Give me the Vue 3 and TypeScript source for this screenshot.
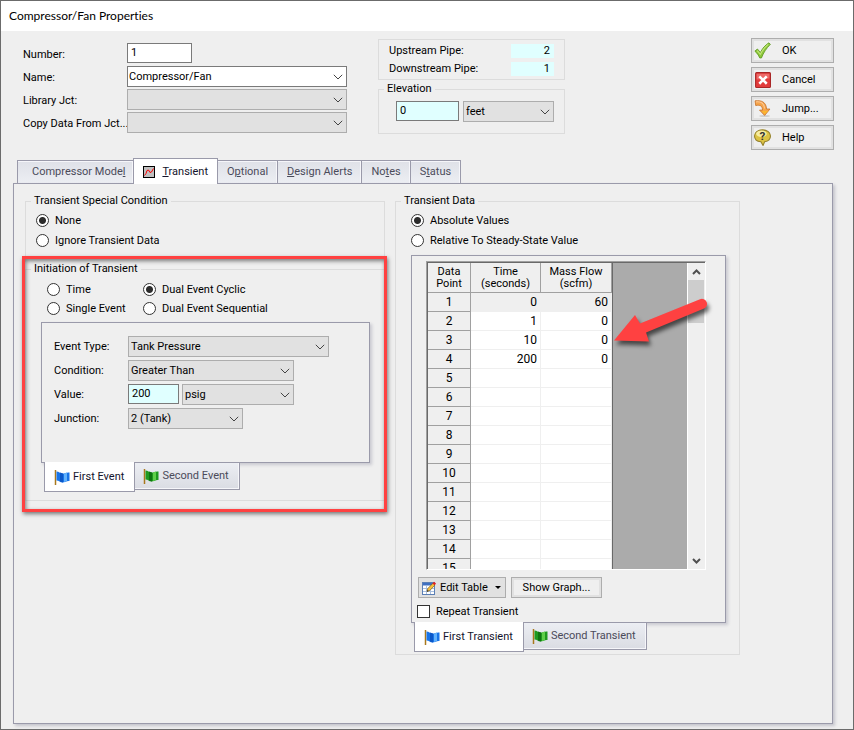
<script setup lang="ts">
import { ref } from 'vue'

interface Tab {
  id: string
  pre: string
  key: string
  post: string
}

interface DataRow {
  time: string
  flow: string
}

const tabs: Tab[] = [
  { id: 'model', pre: 'Compressor Mode', key: 'l', post: '' },
  { id: 'transient', pre: '', key: 'T', post: 'ransient' },
  { id: 'optional', pre: 'O', key: 'p', post: 'tional' },
  { id: 'alerts', pre: '', key: 'D', post: 'esign Alerts' },
  { id: 'notes', pre: 'No', key: 't', post: 'es' },
  { id: 'status', pre: 'S', key: 't', post: 'atus' },
]

const filled: DataRow[] = [
  { time: '0', flow: '60' },
  { time: '1', flow: '0' },
  { time: '10', flow: '0' },
  { time: '200', flow: '0' },
]
const rows: DataRow[] = Array.from({ length: 15 }, (_, i) => filled[i] ?? { time: '', flow: '' })

const activeTab = ref('transient')
const activeEvent = ref('First Event')
const activeTransient = ref('First Transient')
const number = ref('1')
const elevation = ref('0')
const value = ref('200')
const special = ref('none')
const initiation = ref('cyclic')
const mode = ref('absolute')
const repeat = ref(false)
</script>

<template>
  <div class="window">
    <header class="title">Compressor/Fan Properties</header>

    <section class="head">
      <div class="form">
        <label for="number">Number:</label>
        <input id="number" v-model="number" class="box num" type="text" />
        <label for="name">Name:</label>
        <span class="combo white">
          <select id="name"><option>Compressor/Fan</option></select>
          <svg viewBox="0 0 10 6"><path d="M.8.8 5 5 9.2.8" /></svg>
        </span>
        <label for="library">Library Jct:</label>
        <span class="combo">
          <select id="library"><option></option></select>
          <svg viewBox="0 0 10 6"><path d="M.8.8 5 5 9.2.8" /></svg>
        </span>
        <label for="copy">Copy Data From Jct...</label>
        <span class="combo">
          <select id="copy"><option></option></select>
          <svg viewBox="0 0 10 6"><path d="M.8.8 5 5 9.2.8" /></svg>
        </span>
      </div>

      <div class="side">
        <dl class="pipes">
          <dt>Upstream Pipe:</dt>
          <dd>2</dd>
          <dt>Downstream Pipe:</dt>
          <dd>1</dd>
        </dl>
        <fieldset class="elevation">
          <legend>Elevation</legend>
          <div class="pair">
            <input v-model="elevation" class="box cyan" type="text" aria-label="Elevation" />
            <span class="combo">
              <select aria-label="Elevation units"><option>feet</option></select>
              <svg viewBox="0 0 10 6"><path d="M.8.8 5 5 9.2.8" /></svg>
            </span>
          </div>
        </fieldset>
      </div>

      <div class="actions">
        <button type="button" class="btn">
          <svg viewBox="0 0 16 16">
            <path d="M.8 8.600 3.200 6.600 6 9.800C8 6 10.500 3 14 .8l1.400 1.400C11.500 6 9 10 7 15H5.400C4.200 12.200 2.800 10.400.8 8.600Z" fill="#8cc63a" stroke="#5c9a1f" stroke-width=".8" />
            <path d="M3 8.200 6 11.600C8 7.500 10.500 4.500 13.400 2.300" fill="none" stroke="#c4e67a" />
          </svg>
          OK
        </button>
        <button type="button" class="btn">
          <svg viewBox="0 0 16 16">
            <rect x="1.500" y="1.500" width="14" height="14" rx="1" fill="#e23b3b" stroke="#a92626" />
            <path d="M2.500 8V2.500h12V7Z" fill="#ee6a68" />
            <path d="M5 5l7 7M12 5l-7 7" stroke="#fff" stroke-width="2.400" />
          </svg>
          Cancel
        </button>
        <button type="button" class="btn">
          <svg viewBox="0 0 16 16">
            <ellipse cx="10" cy="15" rx="5" ry="1" fill="#cfcfcf" />
            <path d="M1 .8C7 0 11.500 2 11.800 8.500H15L10 14.500 5.200 9.500H8C8 5.800 6 4.200 1.600 5.200Z" fill="#f6a44a" stroke="#c9742a" stroke-width=".8" />
            <path d="M1.800 1.800C6 1.400 9.500 3 10 8" fill="none" stroke="#fbc99a" />
            <path d="M7.300 10.300h6L10 13.400Z" fill="#fbb72c" />
          </svg>
          Jump...
        </button>
        <button type="button" class="btn">
          <svg viewBox="0 0 16 16">
            <path d="M8 .8C12.400.8 15.500 3.200 15.500 6.500 15.500 9.500 13 11.500 10 12L8.500 15.500 6.500 12C3 11.600.5 9.500.5 6.500.5 3.200 3.600.8 8 .8Z" fill="#dcc243" stroke="#94812c" />
            <ellipse cx="7" cy="4.500" rx="5" ry="3" fill="#f7eda0" />
            <text x="8" y="10.500" class="mark">?</text>
          </svg>
          Help
        </button>
      </div>
    </section>

    <nav class="tabs" role="tablist">
      <button
        v-for="t in tabs"
        :key="t.id"
        type="button"
        role="tab"
        :class="['tab', t.id, { on: activeTab === t.id }]"
        :aria-selected="activeTab === t.id"
        @click="activeTab = t.id"
      >
        <svg v-if="t.id === 'transient'" viewBox="0 0 12 12">
          <rect x=".5" y=".5" width="11" height="11" fill="#c0c0c0" stroke="#000" />
          <path d="M1.500 9.500 3 7.500 4 4.500 5.500 4 7 6.500 8.500 6 10.500 2.500" fill="none" stroke="#f00" />
        </svg>
        <span>{{ t.pre }}<u>{{ t.key }}</u>{{ t.post }}</span>
      </button>
    </nav>

    <main class="page">
      <div class="left">
        <fieldset class="special">
          <legend>Transient Special Condition</legend>
          <label class="opt"><input v-model="special" type="radio" name="special" value="none" />None</label>
          <label class="opt"><input v-model="special" type="radio" name="special" value="ignore" />Ignore Transient Data</label>
        </fieldset>

        <div class="marked">
          <fieldset class="initiation">
            <legend>Initiation of Transient</legend>
            <div class="kinds">
              <label class="opt"><input v-model="initiation" type="radio" name="init" value="time" />Time</label>
              <label class="opt"><input v-model="initiation" type="radio" name="init" value="cyclic" />Dual Event Cyclic</label>
              <label class="opt"><input v-model="initiation" type="radio" name="init" value="single" />Single Event</label>
              <label class="opt"><input v-model="initiation" type="radio" name="init" value="sequential" />Dual Event Sequential</label>
            </div>
            <div class="sheet event">
              <label for="etype">Event Type:</label>
              <span class="combo w1">
                <select id="etype"><option>Tank Pressure</option></select>
                <svg viewBox="0 0 10 6"><path d="M.8.8 5 5 9.2.8" /></svg>
              </span>
              <label for="cond">Condition:</label>
              <span class="combo w2">
                <select id="cond"><option>Greater Than</option></select>
                <svg viewBox="0 0 10 6"><path d="M.8.8 5 5 9.2.8" /></svg>
              </span>
              <label for="val">Value:</label>
              <div class="pair w2">
                <input id="val" v-model="value" class="box cyan" type="text" />
                <span class="combo">
                  <select aria-label="Value units"><option>psig</option></select>
                  <svg viewBox="0 0 10 6"><path d="M.8.8 5 5 9.2.8" /></svg>
                </span>
              </div>
              <label for="junc">Junction:</label>
              <span class="combo w3">
                <select id="junc"><option>2 (Tank)</option></select>
                <svg viewBox="0 0 10 6"><path d="M.8.8 5 5 9.2.8" /></svg>
              </span>
            </div>
            <div class="feet" role="tablist">
              <button
                v-for="name in ['First Event', 'Second Event']"
                :key="name"
                type="button"
                role="tab"
                :class="['foot', { on: activeEvent === name }]"
                :aria-selected="activeEvent === name"
                @click="activeEvent = name"
              >
                <svg viewBox="0 0 16 16" :class="name.startsWith('First') ? 'blue' : 'green'">
                  <path class="pole" d="M1.500 1v15" />
                  <path class="cloth" d="M2.500 2.500C5 2.500 6 4.500 8.500 4.500S13 3 15.500 3.500V12C13 11.500 11 13.500 8.500 13.500S5 11.500 2.500 11.500Z" />
                  <path class="shade" d="M6 3.500 9 4.500V13.500L6 12.500Z" />
                  <path class="shine" d="M10 4.500 13 3.500V12L10 13Z" />
                </svg>
                {{ name }}
              </button>
            </div>
          </fieldset>
          <div class="highlight"></div>
        </div>
      </div>

      <fieldset class="data">
        <legend>Transient Data</legend>
        <label class="opt"><input v-model="mode" type="radio" name="mode" value="absolute" />Absolute Values</label>
        <label class="opt"><input v-model="mode" type="radio" name="mode" value="relative" />Relative To Steady-State Value</label>

        <div class="sheet points">
          <div class="grid">
            <table>
              <thead>
                <tr><th>Data<br />Point</th><th>Time<br />(seconds)</th><th>Mass Flow<br />(scfm)</th></tr>
              </thead>
              <tbody>
                <tr v-for="(r, i) in rows" :key="i">
                  <th>{{ i + 1 }}</th>
                  <td>{{ r.time }}</td>
                  <td>{{ r.flow }}</td>
                </tr>
              </tbody>
            </table>
            <div class="void"></div>
            <div class="scroll">
              <button type="button" aria-label="Scroll up"><svg viewBox="0 0 9 6"><path d="M1 5 4.500 1.500 8 5" /></svg></button>
              <div class="thumb"></div>
              <button type="button" aria-label="Scroll down"><svg viewBox="0 0 9 6"><path d="M1 1 4.500 4.500 8 1" /></svg></button>
            </div>
            <svg class="arrow" viewBox="0 0 100 60">
              <path d="M91 5.300A5 5 0 0 1 95 14.500L37 38.500 40 47.500 5 46.500 26 21 31 29.500Z" />
            </svg>
          </div>
          <div class="tools">
            <button type="button" class="btn edit">
              <svg viewBox="0 0 14 14">
                <rect x=".5" y="1.500" width="12" height="12" fill="#fff" stroke="#5b7fb5" />
                <path d="M1 2h11v2.500H1z" fill="#3f6fc0" />
                <path d="M1 7.500h11M1 10.500h11M4.500 5v8M8.500 5v8" stroke="#a9bfdf" fill="none" />
                <path d="M5 10.500 5.800 7.500 11 2.200 13 4 7.800 9.500Z" fill="#f8c13c" stroke="#7b5a1c" stroke-width=".7" />
                <path d="M10.500 2.500 12 .8 14 2.600 12.700 4.300Z" fill="#e32222" />
                <path d="M4.800 10.800 5.500 9 6.600 10Z" fill="#222" />
              </svg>
              Edit Table
              <i class="caret"></i>
            </button>
            <button type="button" class="btn graph">Show Graph...</button>
          </div>
          <label class="opt check"><input v-model="repeat" type="checkbox" />Repeat Transient</label>
        </div>
        <div class="feet" role="tablist">
          <button
            v-for="name in ['First Transient', 'Second Transient']"
            :key="name"
            type="button"
            role="tab"
            :class="['foot', { on: activeTransient === name }]"
            :aria-selected="activeTransient === name"
            @click="activeTransient = name"
          >
            <svg viewBox="0 0 16 16" :class="name.startsWith('First') ? 'blue' : 'green'">
              <path class="pole" d="M1.500 1v15" />
              <path class="cloth" d="M2.500 2.500C5 2.500 6 4.500 8.500 4.500S13 3 15.500 3.500V12C13 11.500 11 13.500 8.500 13.500S5 11.500 2.500 11.500Z" />
              <path class="shade" d="M6 3.500 9 4.500V13.500L6 12.500Z" />
              <path class="shine" d="M10 4.500 13 3.500V12L10 13Z" />
            </svg>
            {{ name }}
          </button>
        </div>
      </fieldset>
    </main>
  </div>
</template>

<style>
body {
  background: #efefef;
}
</style>

<style scoped>
* {
  box-sizing: border-box;
}
.window {
  display: flex;
  flex-direction: column;
  min-height: 100vh;
  padding-bottom: 5px;
  border: 1px solid #6b6b6b;
  background: #efefef;
  color: #000;
  font: 11px/14px Roboto, "Liberation Sans", sans-serif;
}
button,
input,
select {
  margin: 0;
  color: inherit;
  font: inherit;
}
.title {
  height: 30px;
  padding-left: 8px;
  background: #fff;
  font: 12px/30px Lato, "Open Sans", sans-serif;
  font-variant-ligatures: none;
}

/* Header area */
.head {
  display: flex;
  align-items: flex-start;
  padding: 7px 19px 8px 22px;
}
.form {
  display: grid;
  grid-template-columns: 104px 1fr;
  grid-auto-rows: 21px;
  row-gap: 2px;
  align-items: center;
  flex: 0 1 324px;
  padding-top: 5px;
}
.form label {
  padding-top: 2px;
  white-space: nowrap;
}
.box {
  height: 20px;
  min-width: 0;
  padding: 0 3px 2px;
  border: 1px solid #7a7a7a;
  border-radius: 0;
  background: #fff;
}
.cyan {
  background: #e0ffff;
}
.num {
  align-self: start;
  width: 65px;
}
.combo {
  display: block;
  position: relative;
  height: 21px;
}
.combo select {
  width: 100%;
  height: 100%;
  padding: 0 20px 0 2px;
  border: 1px solid #adadad;
  border-radius: 0;
  background: #e1e1e1;
  appearance: none;
}
.combo.white select {
  padding-left: 1px;
  border-color: #7a7a7a;
  background: #fff;
}
.combo svg {
  position: absolute;
  top: 8px;
  right: 4px;
  width: 10px;
  height: 6px;
  fill: none;
  stroke: #444;
  pointer-events: none;
}
.side {
  flex: 0 1 187px;
  margin-left: 31px;
  padding-top: 1px;
}
.pipes {
  display: grid;
  grid-template-columns: 1fr 43px;
  row-gap: 4px;
  margin: 0;
  padding: 4px 10px 3px;
  border: 1px solid #dcdcdc;
}
.pipes dd {
  margin: 0;
  padding-right: 4px;
  background: #e0ffff;
  text-align: right;
}
fieldset {
  min-width: 0;
  margin: 0;
  padding: 0;
  border: 1px solid #dcdcdc;
}
legend {
  padding: 0 3px;
}
.elevation {
  margin-top: 2px;
  padding: 5px 10px 11px 17px;
}
.elevation legend {
  margin-left: -12px;
}
.pair {
  display: grid;
  grid-template-columns: 63px 1fr;
  column-gap: 4px;
}
.actions {
  display: grid;
  row-gap: 4px;
  flex: none;
  width: 83px;
  margin-left: auto;
}
.btn {
  display: flex;
  align-items: center;
  gap: 11px;
  height: 25px;
  padding: 0 2px;
  border: 1px solid #adadad;
  border-radius: 0;
  background: #efefef;
  box-shadow: inset 0 0 0 2px #e1e1e1;
  white-space: nowrap;
}
.btn svg {
  width: 17px;
  height: 17px;
}
.mark {
  fill: #333;
  font: bold 11px Roboto, sans-serif;
  text-anchor: middle;
}

/* Page tabs */
.tabs {
  display: flex;
  align-items: flex-end;
  padding-left: 16px;
}
.tab {
  display: flex;
  align-items: center;
  justify-content: center;
  height: 23px;
  padding: 0 9px;
  border: 1px solid #9a9aaa;
  border-bottom: 0;
  background: linear-gradient(#dfe1e8, #eceef3);
  box-shadow: inset -1px 1px #f6f6fa;
  color: #4b4b5a;
}
.tab + .tab {
  margin-left: -1px;
}
.tab.model {
  padding: 0 8px 0 14px;
}
.tab.on {
  position: relative;
  gap: 7px;
  height: 26px;
  margin-bottom: -1px;
  background: #fff;
  box-shadow: none;
  color: #14142c;
}
.tab svg {
  width: 12px;
  height: 12px;
}

/* Page body */
.page {
  display: grid;
  grid-template-columns: 360fr 345fr 82fr;
  column-gap: 10px;
  align-items: start;
  flex: 1;
  margin: 0 20px 0 12px;
  padding: 10px 0 10px 11px;
  border: 1px solid #9a9aaa;
  box-shadow: 2px 2px 3px #c4c4cc;
}
.left {
  display: grid;
}
.opt {
  display: flex;
  align-items: center;
  gap: 6px;
  white-space: nowrap;
}
.opt input {
  flex: none;
  width: 13px;
  height: 13px;
  border: 1px solid #333;
  background: #fff;
  appearance: none;
}
.opt input[type='radio'] {
  border-radius: 50%;
}
.opt input[type='radio']:checked {
  background: radial-gradient(circle, #2c2c2c 3px, #fff 4px);
}
.opt input[type='checkbox']:checked {
  box-shadow: inset 0 0 0 3px #fff;
  background: #333;
}
.special {
  padding: 3px 10px 12px;
  border-bottom: 0;
}
.special legend {
  margin-left: -5px;
}
.special .opt,
.data > .opt {
  height: 19px;
}
.special .opt + .opt,
.data > .opt + .opt {
  margin-top: 1px;
}
.marked {
  position: relative;
}
.initiation {
  padding: 4px 14px 8px 15px;
}
.initiation legend,
.data legend {
  margin-left: -10px;
}
.kinds {
  display: grid;
  grid-template-columns: 96px 1fr;
  grid-auto-rows: 19px;
  padding-left: 6px;
}
.highlight {
  position: absolute;
  inset: -6px -2px -11px -3px;
  border: 3px solid #ff4141;
  box-shadow: 1px 2px 4px #777, inset 1px 2px 4px #777;
  pointer-events: none;
}
.sheet {
  border: 1px solid #9a9aaa;
  box-shadow: 2px 2px 3px #c8c8d0;
}
.event {
  display: grid;
  grid-template-columns: 74px 1fr;
  grid-auto-rows: 21px;
  row-gap: 3px;
  align-items: center;
  margin-top: 4px;
  padding: 13px 40px 33px 12px;
}
.event .pair {
  grid-template-columns: 51px 1fr;
  column-gap: 3px;
}
.w2 {
  margin-right: 35px;
}
.w3 {
  margin-right: 86px;
}
.feet {
  display: flex;
  align-items: flex-start;
  position: relative;
  padding-left: 3px;
}
.foot {
  display: flex;
  align-items: center;
  gap: 3px;
  height: 27px;
  padding: 0 10px 0 8px;
  border: 1px solid #9a9aaa;
  border-top: 0;
  border-left-width: 0;
  background: linear-gradient(#eceef3, #dadce3);
  box-shadow: inset -1px -1px #f6f6fa;
  color: #4b4b5a;
  white-space: nowrap;
}
.foot.on {
  height: 30px;
  margin-top: -1px;
  padding-left: 9px;
  border-left-width: 1px;
  background: #fff;
  box-shadow: none;
  color: #14142c;
}
.foot svg {
  width: 16px;
  height: 16px;
}
.pole {
  stroke: #a8781c;
  stroke-width: 1.5;
}
.blue .cloth { fill: #1874e8; }
.blue .shade { fill: #0b57c8; }
.blue .shine { fill: #62b2fb; }
.green .cloth { fill: #1f9a1f; }
.green .shade { fill: #0f7410; }
.green .shine { fill: #5fcf4a; }

/* Transient data */
.data {
  padding: 3px 13px 2px 15px;
}
.points {
  margin-top: 5px;
  padding: 5px 5px 1px;
}
.grid {
  display: flex;
  position: relative;
  height: 309px;
  margin: 0 14px 0 9px;
  border: 1px solid #a0a0a0;
  border-color: #a0a0a0 #fff #fff #a0a0a0;
  box-shadow: inset 1px 1px #696969;
  padding: 1px 1px 0;
}
.grid table {
  display: block;
  flex: none;
  overflow: hidden;
  border-right: 1px solid #696969;
  border-collapse: separate;
  border-spacing: 0;
  background: #fff;
}
.grid th,
.grid td {
  width: 71px;
  height: 19px;
  padding: 0 3px 0 0;
  border: 0 solid #efefef;
  border-width: 0 1px 1px 0;
  text-align: right;
  font-size: 12px;
}
.grid th {
  padding: 0;
  border-color: #a0a0a0;
  background: #efefef;
  font-weight: 400;
  text-align: center;
}
.grid th:first-child {
  width: 43px;
}
.grid thead th {
  height: 30px;
  font-size: 11px;
  line-height: 12px;
}
.grid th:nth-child(2),
.grid td:nth-child(2) {
  width: 70px;
}
.grid tbody tr:first-child td {
  background: #efefef;
}
.void {
  flex: 1;
  background: #ababab;
}
.scroll {
  display: flex;
  flex-direction: column;
  width: 17px;
  border-left: 1px solid #fff;
}
.scroll button {
  display: grid;
  place-items: center;
  height: 17px;
  padding: 0;
  border: 0;
  background: none;
}
.scroll svg {
  width: 9px;
  height: 6px;
  fill: none;
  stroke: #505050;
  stroke-width: 2;
}
.thumb {
  height: 43px;
  margin-bottom: auto;
  background: #cdcdcd;
}
.arrow {
  position: absolute;
  top: 32px;
  right: -4px;
  width: 100px;
  height: 60px;
  fill: #ff4141;
  filter: drop-shadow(2px 4px 2px #0009);
  pointer-events: none;
}
.tools {
  display: flex;
  gap: 5px;
  margin: 7px 0 0 1px;
}
.tools .btn {
  height: 21px;
}
.edit {
  gap: 4px;
  width: 88px;
  padding: 0 4px 0 3px;
  background: #e1e1e1;
}
.edit svg {
  width: 14px;
  height: 14px;
}
.graph {
  width: 91px;
  justify-content: center;
}
.caret {
  margin-left: auto;
  border: 3px solid transparent;
  border-top-color: #000;
  border-bottom: 0;
}
.check {
  height: 19px;
  margin-top: 4px;
}
</style>
